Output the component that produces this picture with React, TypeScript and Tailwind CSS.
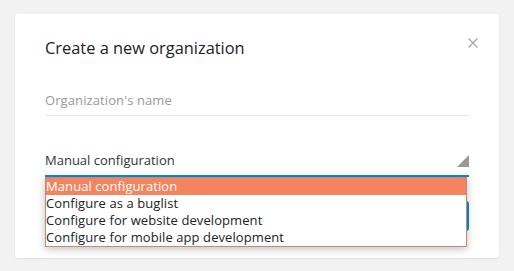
import React from "react";

const options = [
  "Manual configuration",
  "Configure as a buglist",
  "Configure for website development",
  "Configure for mobile app development",
];

export default function App() {
  return (
    <div className="w-[514px] h-[271px] bg-[#f2f2f2] pt-[14px] px-[15px] font-['Open_Sans',sans-serif]">
      <div className="relative bg-white rounded-[3px] shadow-[0_1px_2px_rgba(0,0,0,0.08)] h-[244px] pl-[30px] pr-[30px] pt-[22px]">
        <div className="flex items-start justify-between">
          <h1 className="text-[16.4px] leading-[24px] text-[#222]">Create a new organization</h1>
          <button className="-mr-[9px] mt-[2px] w-[10px] h-[10px] text-[#aaa]">
            <svg viewBox="0 0 10 10" width="10" height="10" stroke="currentColor" strokeWidth="1.4">
              <path d="M0.5 0.5 L9.5 9.5 M9.5 0.5 L0.5 9.5" />
            </svg>
          </button>
        </div>

        <div className="mt-[26px] h-[30px] border-b border-[#e8e8e8] flex items-center">
          <span className="text-[13px] tracking-[0.1px] text-[#9a9a9a]">Organization's name</span>
        </div>

        <div className="relative mt-[31px] h-[30px] border-b-2 border-[#0a8cdc] flex items-center">
          <span className="text-[13px] text-[#333]">Manual configuration</span>
          <div className="absolute right-0 bottom-[8px] w-0 h-0 border-l-[12px] border-l-transparent border-b-[12px] border-b-[#999]" />
        </div>

        <div className="relative">
          <div className="flex justify-end pt-[24px]">
            <div className="w-[110px] h-[30px] rounded-[3px] bg-[#0a8cdc]" />
          </div>
          <ul className="absolute left-0 top-0 w-[422px] bg-white border border-[#c98a74] shadow-[0_2px_8px_rgba(0,0,0,0.25)] text-[13px] tracking-[0.08px] text-[#222]">
            {options.map((o, i) => (
              <li
                key={o}
                className={
                  "h-[17px] leading-[17px] " +
                  (i === 0 ? "bg-[#f3845f] text-white" : "")
                }
              >
                {o}
              </li>
            ))}
          </ul>
        </div>
      </div>
    </div>
  );
}
